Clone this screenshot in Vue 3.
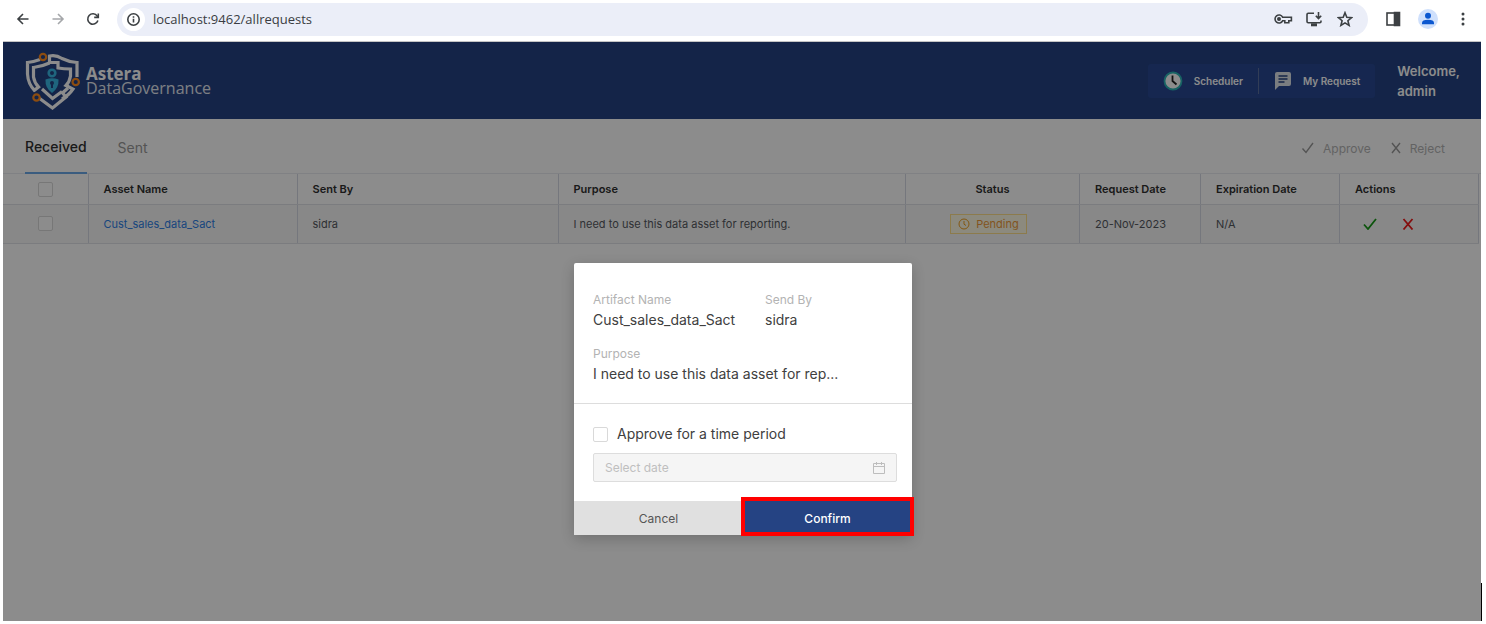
<script setup>
import { ref } from 'vue'

const url = ref('localhost:9462/allrequests')
const limited = ref(false)
const rows = [
  {
    name: 'Cust_sales_data_Sact',
    by: 'sidra',
    purpose: 'I need to use this data asset for reporting.',
    status: 'Pending',
    requested: '20-Nov-2023',
    expires: 'N/A'
  }
]
</script>

<template>
  <div class="page">
    <div class="browser">
      <button class="nav" aria-label="Back">
        <svg width="16" height="16" viewBox="0 0 16 16"><path d="M13.5 8H3M8 3L3 8l5 5" /></svg>
      </button>
      <button class="nav off" aria-label="Forward">
        <svg width="16" height="16" viewBox="0 0 16 16"><path d="M2.5 8H13M8 3l5 5-5 5" /></svg>
      </button>
      <button class="nav" aria-label="Reload">
        <svg width="16" height="16" viewBox="0 0 16 16"><path d="M12.9 9.6A5.2 5.2 0 1 1 12.2 5L13 6" /><path d="M13.3 2.4v4H9.2" /></svg>
      </button>
      <div class="address">
        <button class="site" aria-label="Site information">
          <svg width="15" height="15" viewBox="0 0 15 15"><circle cx="7.5" cy="7.5" r="5.7" /><path d="M7.5 6.8v3.7M7.5 4.3v1.4" /></svg>
        </button>
        <input v-model="url" class="url" aria-label="Address" />
        <button class="tool" aria-label="Passwords">
          <svg width="20" height="16" viewBox="0 0 20 16"><path d="M9.6 6.2a4 4 0 1 0 0 3.6h2.2v2h4V9.8h2.6V6.2z" /><circle cx="6" cy="8" r="1.2" class="solid" /></svg>
        </button>
        <button class="tool" aria-label="Install app">
          <svg width="18" height="16" viewBox="0 0 18 16"><path d="M9 2.2H3.2Q2 2.2 2 3.4v7.2q0 1.2 1.2 1.2h11.6q1.2 0 1.2-1.2V9.5M13.5 1v6M10.8 4.8l2.7 2.7 2.7-2.7" /><path d="M6 13.8h6" class="thick" /></svg>
        </button>
        <button class="tool" aria-label="Bookmark">
          <svg width="16" height="16" viewBox="0 0 16 16"><path d="M8 1.7l1.8 4.5 4.8.4-3.7 3.1 1.2 4.7L8 11.9l-4.100 2.500 1.200-4.700L1.400 6.600l4.800-.4z" /></svg>
        </button>
      </div>
      <button class="nav" aria-label="Side panel">
        <svg width="16" height="16" viewBox="0 0 16 16"><rect x="2" y="2" width="12" height="12" /><path d="M9.5 1.5H14.5V14.5H9.5z" class="solid" /></svg>
      </button>
      <button class="nav" aria-label="Profile">
        <svg width="20" height="20" viewBox="0 0 20 20" class="avatar"><circle cx="10" cy="10" r="10" fill="#cfe0fc" /><circle cx="10" cy="6.8" r="3" fill="#0b57d0" /><path d="M4 15.2v-1.400q0-3 6-3t6 3v1.400z" fill="#0b57d0" /></svg>
      </button>
      <button class="nav" aria-label="Menu">
        <svg width="16" height="16" viewBox="0 0 16 16" class="dots"><circle cx="8" cy="3" r="1.500" /><circle cx="8" cy="8" r="1.500" /><circle cx="8" cy="13" r="1.500" /></svg>
      </button>
    </div>

    <div class="app">
      <header class="top">
        <svg class="logo" width="56" height="60" viewBox="0 0 56 60" fill="none" aria-hidden="true">
          <g stroke="#fff" stroke-width="3.200">
            <path d="M15 8.500Q8 11 2.500 11.500V23Q3 33 10 40" />
            <path d="M24.500 13V5Q31 3.500 37 7.500Q44 11 52 11.500V26" />
            <path d="M24.500 12Q17 15.500 8.500 16.500V26Q9.500 32 13.500 36L8.500 40" />
            <path d="M24.500 11.500H33V17Q39 18 45.500 18V25Q44.500 31 41 34.500L48 38Q44 44 37 48" />
            <path d="M14 47L27.500 57L41 46L37.500 42L43 37" />
            <path d="M17 38L27.500 47.500L37 40.500" />
          </g>
          <g fill="#254383" stroke="#ff8a1e" stroke-width="2.200">
            <circle cx="18" cy="6" r="3.200" /><circle cx="50.700" cy="31" r="3.200" /><circle cx="11.500" cy="46.500" r="3.200" />
          </g>
          <circle cx="27" cy="22" r="3.300" stroke="#39b9e6" stroke-width="2.600" />
          <path d="M20.500 28.500Q27 26 33.500 28.500Q34 37 27 42Q20 37 20.500 28.500Z" fill="#39b9e6" />
          <circle cx="27" cy="32" r="2" fill="#254383" /><path d="M27 32v5" stroke="#254383" stroke-width="2" />
        </svg>
        <div class="brand"><b>Astera</b><span>DataGovernance</span></div>
        <nav class="links">
          <a href="#scheduler">
            <svg width="20" height="20" viewBox="0 0 20 20" fill="none"><circle cx="10" cy="10" r="8.500" fill="#fff" stroke="#2ab5b5" stroke-width="1.800" /><path d="M9.500 4.500V10l4 3.500" stroke="#222" stroke-width="1.800" /></svg>
            Scheduler
          </a>
          <a href="#requests">
            <svg width="18" height="20" viewBox="0 0 18 20"><path d="M3 1h12q2 0 2 2v10q0 2-2 2H5l-4 4V3q0-2 2-2z" fill="#dfe3ea" /><path d="M4.500 5h9M4.500 8h9M4.500 11h6" stroke="#254383" stroke-width="1.400" /></svg>
            My Request
          </a>
        </nav>
        <div class="welcome">Welcome,<br />admin</div>
      </header>

      <div class="bar">
        <button class="tab active">Received</button>
        <button class="tab">Sent</button>
        <div class="bulk">
          <button disabled><svg width="14" height="12" viewBox="0 0 14 12"><path d="M1.500 6.500l3.500 4L12 1" /></svg>Approve</button>
          <button disabled><svg width="12" height="12" viewBox="0 0 12 12"><path d="M2 1l8 10M10 1L2 11" /></svg>Reject</button>
        </div>
      </div>

      <div class="list">
        <table>
          <colgroup>
            <col class="c-check" /><col class="c-name" /><col class="c-by" /><col /><col class="c-status" /><col class="c-req" /><col class="c-exp" /><col class="c-act" />
          </colgroup>
          <thead>
            <tr>
              <th class="center"><input type="checkbox" aria-label="Select all requests" /></th>
              <th>Asset Name</th><th>Sent By</th><th>Purpose</th><th class="center">Status</th><th>Request Date</th><th>Expiration Date</th><th>Actions</th>
            </tr>
          </thead>
          <tbody>
            <tr v-for="r in rows" :key="r.name">
              <td class="center"><input type="checkbox" :aria-label="'Select ' + r.name" /></td>
              <td><a href="#asset">{{ r.name }}</a></td>
              <td>{{ r.by }}</td>
              <td>{{ r.purpose }}</td>
              <td class="center">
                <span class="tag"><svg width="12" height="12" viewBox="0 0 12 12"><circle cx="6" cy="6" r="5" /><path d="M6 3v3.200l2 1.300" /></svg>{{ r.status }}</span>
              </td>
              <td>{{ r.requested }}</td>
              <td>{{ r.expires }}</td>
              <td>
                <div class="acts">
                  <button class="yes" aria-label="Approve request"><svg width="14" height="12" viewBox="0 0 14 12"><path d="M1 6.500l4 4.500L13 1" /></svg></button>
                  <button class="no" aria-label="Reject request"><svg width="12" height="12" viewBox="0 0 12 12"><path d="M1.500 1l9 10.500M10.500 1l-9 10.500" /></svg></button>
                </div>
              </td>
            </tr>
          </tbody>
        </table>
      </div>

      <div class="mask">
        <div class="modal" role="dialog" aria-label="Approve request">
          <dl class="info">
            <div><dt>Artifact Name</dt><dd>Cust_sales_data_Sact</dd></div>
            <div><dt>Send By</dt><dd>sidra</dd></div>
            <div class="wide"><dt>Purpose</dt><dd>I need to use this data asset for rep...</dd></div>
          </dl>
          <div class="period">
            <label><input v-model="limited" type="checkbox" />Approve for a time period</label>
            <div class="date">
              <input type="text" placeholder="Select date" aria-label="Select date" disabled />
              <svg width="14" height="14" viewBox="0 0 14 14"><path d="M1.500 2.500h11v10h-11zM1.500 5.500h11M4.500 1v3M9.500 1v3" /></svg>
            </div>
          </div>
          <div class="foot">
            <button class="cancel">Cancel</button>
            <button class="confirm">Confirm</button>
          </div>
        </div>
      </div>
    </div>
    <span class="caret"></span>
  </div>
</template>

<style>
body {
  margin: 0;
  background: #fff;
}
</style>

<style scoped>
* {
  box-sizing: border-box;
}
.page {
  position: relative;
  display: flex;
  flex-direction: column;
  min-height: 100vh;
  padding: 0 5px 3px 3px;
  font-family: Inter, "Liberation Sans", sans-serif;
}
button {
  font: inherit;
  border: 0;
  padding: 0;
  background: none;
  display: flex;
  align-items: center;
  justify-content: center;
}
a {
  text-decoration: none;
}
.browser {
  display: flex;
  align-items: center;
  height: 42px;
  padding: 0 1px 3px 2px;
  border-bottom: 1px solid #c4c4c4;
}
.nav {
  width: 35px;
  height: 34px;
}
.nav svg,
.address svg {
  fill: none;
  stroke: #3c4043;
  stroke-width: 1.6;
}
.nav .avatar {
  stroke: none;
}
.nav .dots {
  fill: #3c4043;
  stroke: none;
}
.off svg {
  stroke: #a5a7aa;
}
.browser .solid {
  fill: #3c4043;
}
.browser .thick {
  stroke-width: 3;
}
.address {
  flex: 1;
  display: flex;
  align-items: center;
  height: 33px;
  margin: 0 7px;
  padding: 0 8px 0 5px;
  border-radius: 17px;
  background: #ebeef8;
}
.site {
  width: 23px;
  height: 23px;
  border-radius: 50%;
  background: #fff;
}
.url {
  flex: 1;
  min-width: 0;
  margin-left: 8px;
  padding: 0;
  border: 0;
  background: none;
  font: 13px "Noto Sans", "Open Sans", sans-serif;
  font-family: "Open Sans", sans-serif;
  color: #3a3d42;
}
.tool {
  width: 31px;
  height: 24px;
}
.app {
  position: relative;
  flex: 1;
  background: #fff;
}
.top {
  display: flex;
  align-items: center;
  height: 77px;
  padding: 0 21px;
  background: #254383;
  color: #fff;
}
.logo {
  margin-left: 1px;
}
.brand {
  display: flex;
  flex-direction: column;
  margin-left: 5px;
  font-family: "Open Sans", sans-serif;
  font-size: 17px;
  line-height: 15px;
}
.brand span {
  font-size: 16px;
  color: #e4e8f0;
}
.links {
  display: flex;
  align-items: center;
  height: 34px;
  margin-left: auto;
  border-radius: 3px;
  background: #284893;
}
.links a {
  display: flex;
  align-items: center;
  gap: 11px;
  height: 26px;
  padding: 0 15px;
  font-size: 10px;
  font-weight: 600;
  color: #fff;
}
.links a + a {
  border-left: 1px solid #5b6f9e;
}
.welcome {
  margin-left: 22px;
  font-size: 13px;
  font-weight: 600;
  line-height: 20px;
}
.bar {
  display: flex;
  gap: 31px;
  height: 55px;
  padding: 0 36px 0 22px;
  border-bottom: 1px solid #e9ebf0;
}
.tab {
  height: 55px;
  padding-top: 2px;
  font-size: 14px;
  color: #999;
}
.tab.active {
  color: #303030;
  font-weight: 500;
  border-bottom: 2px solid #6aa8e8;
}
.bulk {
  display: flex;
  gap: 19px;
  margin-left: auto;
  padding-top: 4px;
}
.bulk button {
  gap: 8px;
  font-size: 12px;
  color: #b4b4b4;
}
.bulk svg {
  fill: none;
  stroke: #999;
  stroke-width: 1.4;
}
.list {
  padding-right: 2px;
}
table {
  width: 100%;
  table-layout: fixed;
  border-collapse: collapse;
  font-size: 11px;
}
.c-check { width: 85px; }
.c-name { width: 209px; }
.c-by { width: 261px; }
.c-status { width: 174px; }
.c-req { width: 121px; }
.c-exp { width: 139px; }
.c-act { width: 139px; }
th,
td {
  height: 30px;
  padding: 0 15px;
  text-align: left;
  white-space: nowrap;
  border-right: 1px solid #d5d9e4;
  border-bottom: 1px solid #e0e2e8;
}
th {
  font-weight: 600;
  color: #303030;
}
td {
  height: 39px;
  color: #55585f;
  background: #f8f8f8;
}
td a {
  color: #2e7fe6;
}
.center {
  text-align: center;
}
input[type="checkbox"] {
  appearance: none;
  width: 15px;
  height: 15px;
  margin: 0;
  border: 1px solid #d9d9d9;
  border-radius: 2px;
  background: #fff;
  vertical-align: middle;
}
.tag {
  display: inline-flex;
  align-items: center;
  gap: 6px;
  height: 20px;
  margin-right: 8px;
  padding: 0 7px;
  border: 1px solid #ffe08a;
  background: #fffbe6;
  color: #ed9a3a;
}
.tag svg {
  fill: none;
  stroke: #f0a020;
}
.acts {
  display: flex;
  gap: 25px;
  padding-left: 8px;
}
.acts svg {
  fill: none;
  stroke-width: 1.8;
}
.yes svg {
  stroke: #169a16;
}
.no svg {
  stroke: #f01818;
}
.mask {
  position: absolute;
  inset: 0;
  display: flex;
  justify-content: center;
  align-items: flex-start;
  padding: 221px 0 0 2px;
  background: rgba(0, 0, 0, 0.45);
}
.modal {
  width: 338px;
  border-radius: 2px;
  background: #fff;
  color: #404040;
  box-shadow: 0 4px 14px rgba(0, 0, 0, 0.2);
}
.info {
  display: grid;
  grid-template-columns: 159px 1fr;
  gap: 15px 13px;
  margin: 0;
  padding: 27px 19px 20px;
  border-bottom: 1px solid #ddd;
}
.wide {
  grid-column: 1 / -1;
}
dt {
  font-size: 12px;
  line-height: 20px;
  color: #b3b3b3;
}
dd {
  margin: 0;
  font-size: 14px;
  line-height: 19px;
}
.period {
  padding: 21px 15px 19px 19px;
}
.period label {
  display: flex;
  align-items: center;
  gap: 9px;
  font-size: 14px;
  line-height: 18px;
}
.date {
  display: flex;
  align-items: center;
  height: 29px;
  margin-top: 10px;
  padding: 0 10px 0 11px;
  border: 1px solid #ddd;
  border-radius: 2px;
  background: #f5f5f5;
}
.date input {
  flex: 1;
  min-width: 0;
  padding: 0;
  border: 0;
  background: none;
  font: inherit;
  font-size: 12px;
}
.date input::placeholder {
  color: #bfbfbf;
}
.date svg {
  fill: none;
  stroke: #bdbdbd;
}
.foot {
  display: flex;
  height: 34px;
  font-size: 12px;
}
.foot button {
  flex: 1;
}
.cancel {
  background: #e0e0e0;
  color: #555;
}
.foot .confirm {
  position: relative;
  background: #254383;
  color: #fff;
  font-weight: 500;
}
.confirm::after {
  content: "";
  position: absolute;
  inset: -4px -2px -1px;
  border: 4px solid #f00;
}
.caret {
  position: absolute;
  right: 4px;
  bottom: 3px;
  width: 1px;
  height: 38px;
  background: #000;
}
</style>
